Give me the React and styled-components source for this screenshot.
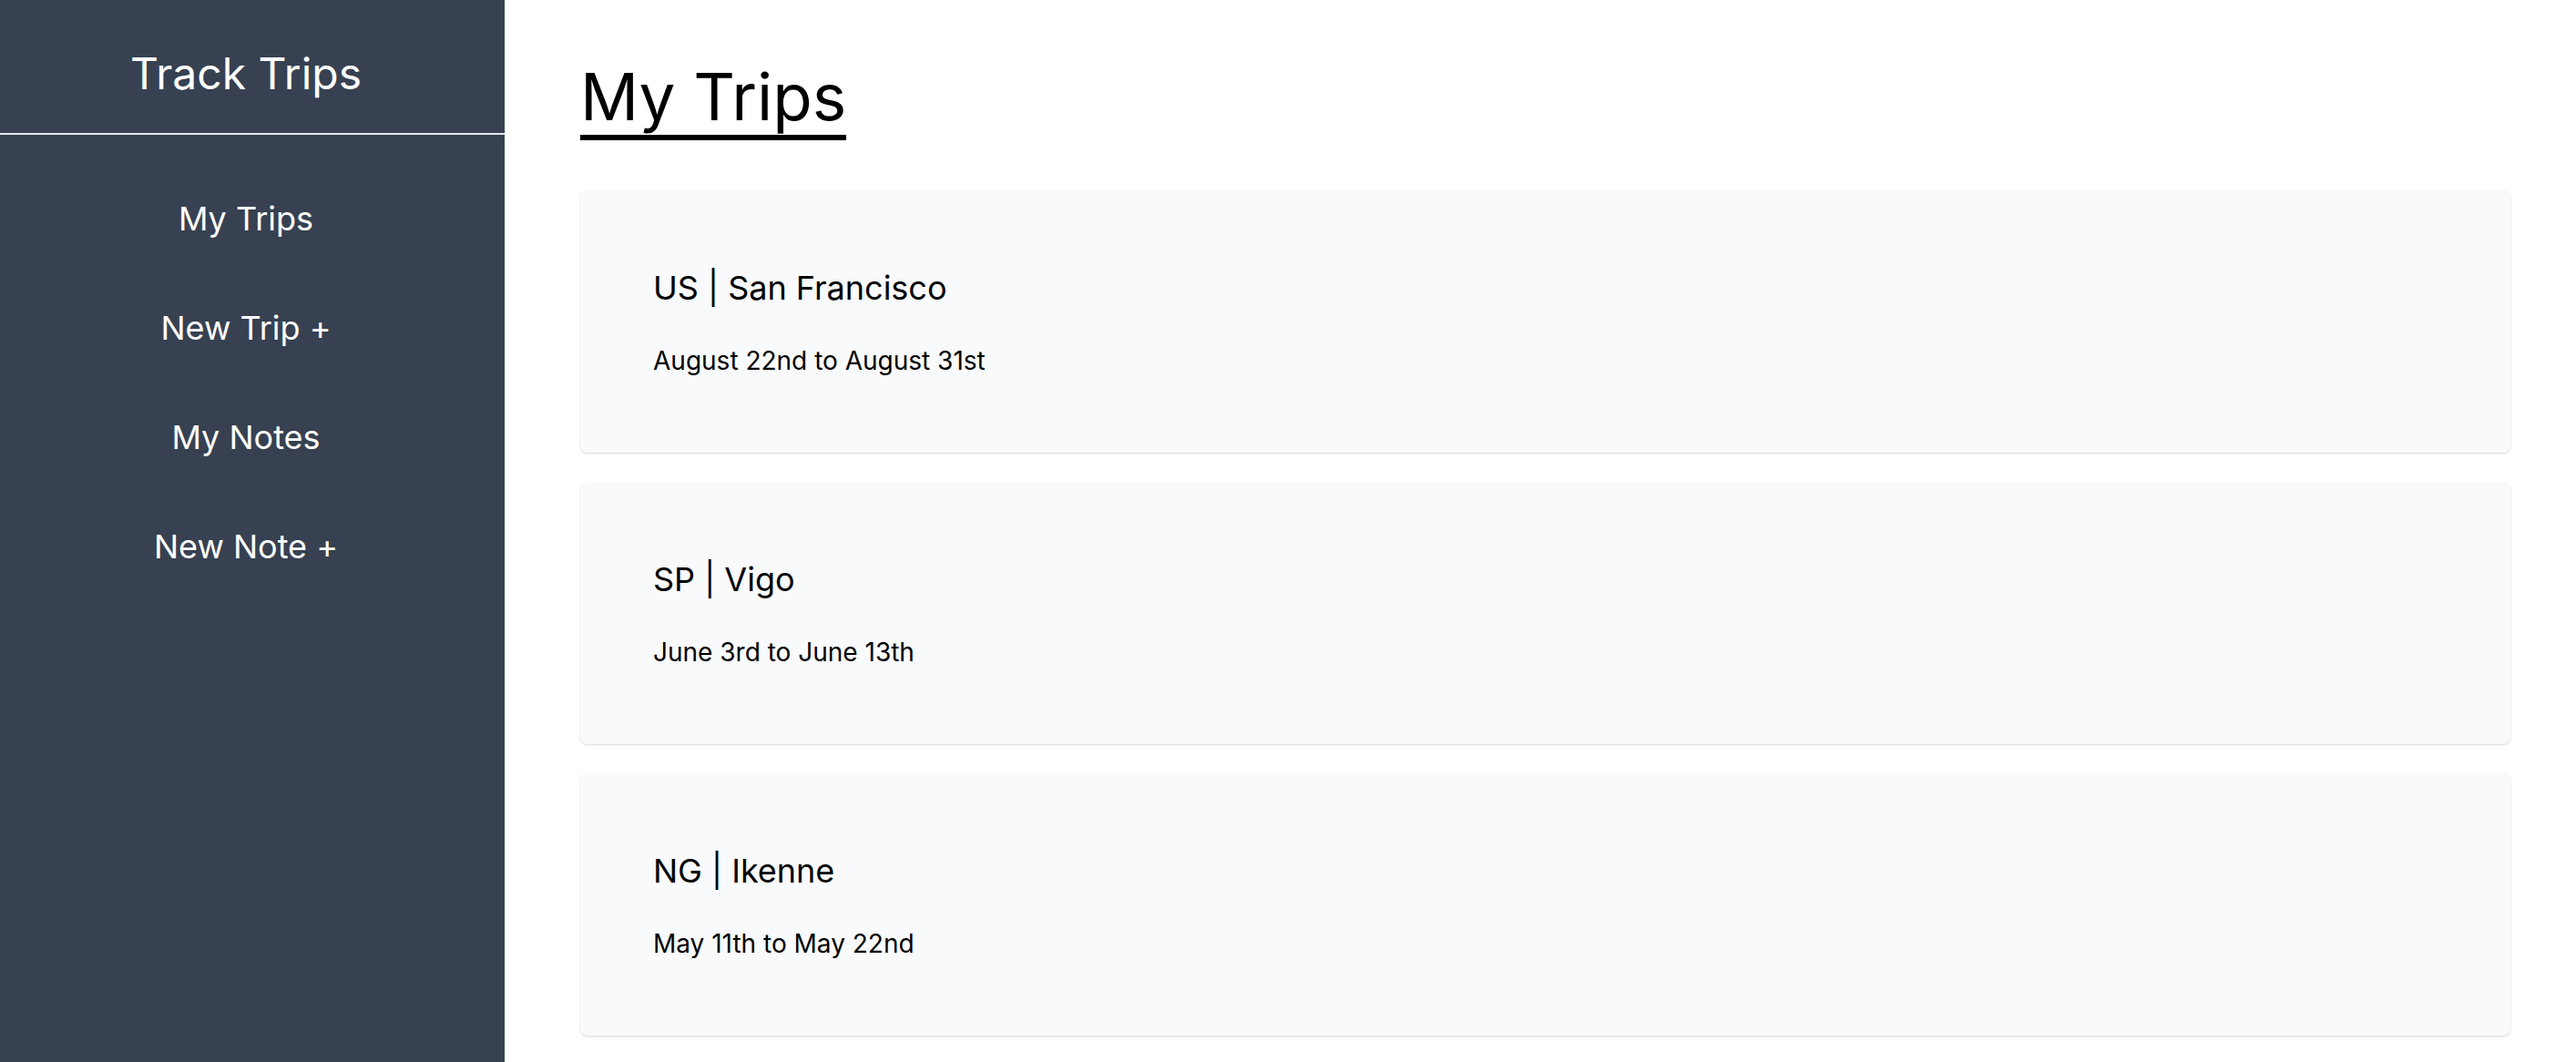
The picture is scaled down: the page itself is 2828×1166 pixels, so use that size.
import React from 'react';
import styled, { createGlobalStyle } from "styled-components";

const GlobalStyle = createGlobalStyle`
  html, body {
    margin: 0;
    padding: 0;
    background: #ffffff;
  }
  body {
    font-family: Inter, "Noto Sans", "Liberation Sans", sans-serif;
    color: #000000;
  }
  * {
    box-sizing: border-box;
  }
`;

const Layout = styled.div`
  display: flex;
  min-height: 100vh;
`;

const Sidebar = styled.aside`
  width: 554px;
  flex-shrink: 0;
  background: #374151;
  color: #ffffff;
  display: flex;
  flex-direction: column;
`;

const Brand = styled.div`
  padding: 45px 14px 29px 0;
  border-bottom: 2px solid #e5e7eb;
  text-align: center;
  font-size: 48px;
  line-height: 72px;
`;

const Nav = styled.nav`
  display: flex;
  flex-direction: column;
  align-items: center;
  gap: 66px;
  padding: 65px 14px 0 0;
`;

const NavLink = styled.a`
  font-size: 36px;
  line-height: 54px;
  color: #ffffff;
  text-decoration: none;
  cursor: pointer;
`;

const Main = styled.main`
  flex: 1;
  padding: 64px 72px 0 83px;
`;

const PageTitle = styled.h1`
  display: inline-block;
  margin: 0 0 55px;
  font-size: 71px;
  line-height: 84px;
  font-weight: 400;
  border-bottom: 6px solid #000000;
`;

const TripList = styled.div`
  display: flex;
  flex-direction: column;
  gap: 32px;
`;

const TripCard = styled.div`
  background: #f9fafb;
  border-radius: 8px;
  padding: 80px;
  box-shadow: 0 1px 3px rgba(0, 0, 0, 0.1), 0 1px 2px rgba(0, 0, 0, 0.06);
`;

const TripPlace = styled.h2`
  margin: 0 0 32px;
  font-size: 36px;
  line-height: 54px;
  font-weight: 400;
`;

const TripDates = styled.p`
  margin: 0;
  font-size: 28px;
  line-height: 42px;
`;

const trips = [
    { country: 'US', city: 'San Francisco', dates: 'August 22nd to August 31st' },
    { country: 'SP', city: 'Vigo', dates: 'June 3rd to June 13th' },
    { country: 'NG', city: 'Ikenne', dates: 'May 11th to May 22nd' },
];

const App = () => {
    return (
        <Layout>
            <GlobalStyle />
            <Sidebar>
                <Brand>Track Trips</Brand>
                <Nav>
                    <NavLink>My Trips</NavLink>
                    <NavLink>New Trip +</NavLink>
                    <NavLink>My Notes</NavLink>
                    <NavLink>New Note +</NavLink>
                </Nav>
            </Sidebar>
            <Main>
                <PageTitle>My Trips</PageTitle>
                <TripList>
                    {trips.map((trip) => (
                        <TripCard key={trip.city}>
                            <TripPlace>{trip.country} | {trip.city}</TripPlace>
                            <TripDates>{trip.dates}</TripDates>
                        </TripCard>
                    ))}
                </TripList>
            </Main>
        </Layout>
    );
};

export default App;
